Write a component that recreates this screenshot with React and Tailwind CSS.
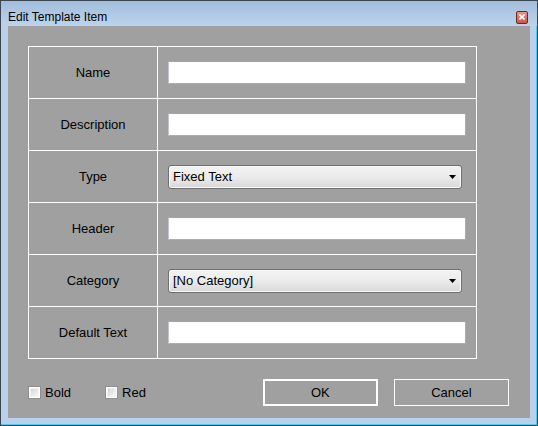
const ROWS = [
  { label: 'Name', kind: 'text' },
  { label: 'Description', kind: 'text' },
  { label: 'Type', kind: 'combo', value: 'Fixed Text' },
  { label: 'Header', kind: 'text' },
  { label: 'Category', kind: 'combo', value: '[No Category]' },
  { label: 'Default Text', kind: 'text' },
]

function TextBox() {
  return (
    <div className="w-[298px] h-[23px] bg-white border border-[#abadb3] border-t-[#a0a3ab] border-l-[#c2c5cc]" />
  )
}

function Combo({ value }) {
  return (
    <div className="w-[294px] h-[24px] flex items-center justify-between pl-[4px] pr-[5px] rounded-[3px] border border-[#707070] bg-gradient-to-b from-[#f3f3f3] via-[#ebebeb] to-[#d8d8d8] shadow-[inset_0_0_0_1px_#fafafa]">
      <span className="text-[13px] text-black leading-none">{value}</span>
      <svg width="7" height="4" viewBox="0 0 7 4"><path d="M0 0h7L3.5 4z" fill="#000" /></svg>
    </div>
  )
}

function Check({ label }) {
  return (
    <div className="flex items-center gap-[4px]">
      <div className="w-[13px] h-[13px] border border-[#8e8f8f] bg-white p-[1px]">
        <div className="w-full h-full bg-gradient-to-br from-[#d5d6d8] to-[#f8f8f9] border border-[#f4f4f4]" />
      </div>
      <span className="text-[13px] text-black leading-none">{label}</span>
    </div>
  )
}

export default function App() {
  return (
    <div
      className="w-[538px] h-[426px] border border-[#3b4651] bg-[#b9d1ea] flex flex-col shadow-[inset_-1px_-1px_0_#59c8ee]"
      style={{ fontFamily: '"Liberation Sans", Arial, sans-serif' }}
    >
      <div className="h-[25px] flex items-center justify-between pt-[7px] pl-[7px] pr-[9px] bg-gradient-to-b from-[#a2bddb] to-[#bcd3ec]">
        <span className="text-[12px] text-black leading-none">Edit Template Item</span>
        <div className="w-[12px] h-[13px] rounded-[2px] border border-[#6b2a22] bg-gradient-to-b from-[#e6958a] to-[#c75a4c] flex items-center justify-center">
          <svg width="6" height="6" viewBox="0 0 6 6"><path d="M0.5 0.5L5.5 5.5M5.5 0.5L0.5 5.5" stroke="#fff" strokeWidth="1.6" /></svg>
        </div>
      </div>
      <div className="ml-[7px] w-[522px] h-[392px] bg-[#a0a0a0] pl-[20px] pt-[20px]">
        <div className="w-[449px] grid grid-cols-[129px_1fr] border-r border-b border-white">
          {ROWS.map(r => (
            <div key={r.label} className="contents">
              <div className="h-[52px] border-t border-l border-white flex items-center justify-center">
                <span className="text-[13px] text-black">{r.label}</span>
              </div>
              <div className="h-[52px] border-t border-l border-white flex items-center pl-[10px]">
                {r.kind === 'text' ? <TextBox /> : <Combo value={r.value} />}
              </div>
            </div>
          ))}
        </div>
        <div className="flex items-center mt-[20px] h-[27px]">
          <Check label="Bold" />
          <div className="ml-[34px]"><Check label="Red" /></div>
          <button className="ml-[117px] w-[115px] h-[27px] border-2 border-white text-[13px] text-black">OK</button>
          <button className="ml-[16px] w-[115px] h-[27px] border-[1.5px] border-white text-[13px] text-black">Cancel</button>
        </div>
      </div>
    </div>
  )
}
